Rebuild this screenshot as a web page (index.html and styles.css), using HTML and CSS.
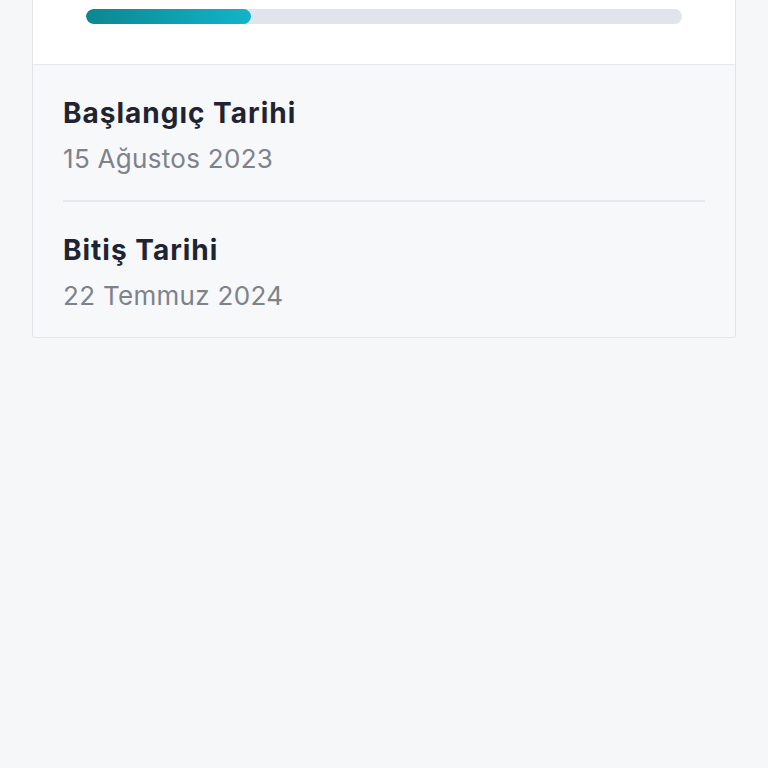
FILE: index.html
```html
<!DOCTYPE html>
<html lang="tr">
<head>
    <meta charset="UTF-8">
    <meta name="viewport" content="width=device-width, initial-scale=1.0">
    <title>Proje Detayı</title>
    <link rel="stylesheet" href="styles.css">
</head>
<body>
    <div class="project-card">
        <!-- Progress -->
        <div class="card-top">
            <div class="progress">
                <div class="progress-fill" style="width: 27.7%"></div>
            </div>
        </div>

        <!-- Dates -->
        <div class="card-dates">
            <div class="date-item">
                <h3>Başlangıç Tarihi</h3>
                <p>15 Ağustos 2023</p>
            </div>
            <div class="date-item">
                <h3>Bitiş Tarihi</h3>
                <p>22 Temmuz 2024</p>
            </div>
        </div>
    </div>
</body>
</html>
```

FILE: styles.css
```css
/* Global Styles */
body {
    font-family: Inter, "Noto Sans", sans-serif;
    margin: 0;
    padding: 0 32px;
    background-color: #f6f7f9;
    color: #1f2433;
}

/* Card */
.project-card {
    margin-top: -1px;
    border: 1px solid #e2e4e8;
    border-radius: 0 0 3px 3px;
    background-color: #f7f8fa;
}

.card-top {
    background-color: #fff;
    padding: 9px 53px 40px;
    border-bottom: 1px solid #e6e8ec;
}

.progress {
    height: 15px;
    border-radius: 8px;
    background-color: #e1e4ec;
    overflow: hidden;
}

.progress-fill {
    height: 100%;
    border-radius: 8px;
    background: linear-gradient(90deg, #0b8790, #12b4ca);
}

/* Dates */
.card-dates {
    padding: 0 30px;
}

.date-item {
    padding: 31px 0 25px;
}

.date-item + .date-item {
    border-top: 2px solid #e5e8ed;
}

.date-item h3 {
    margin: 0;
    font-size: 28px;
    line-height: 34px;
    font-weight: 700;
    letter-spacing: 1px;
    color: #1f2433;
}

.date-item p {
    margin: 13px 0 0;
    font-size: 26px;
    line-height: 32px;
    font-weight: 400;
    letter-spacing: 0.3px;
    color: #7d828b;
}
```
